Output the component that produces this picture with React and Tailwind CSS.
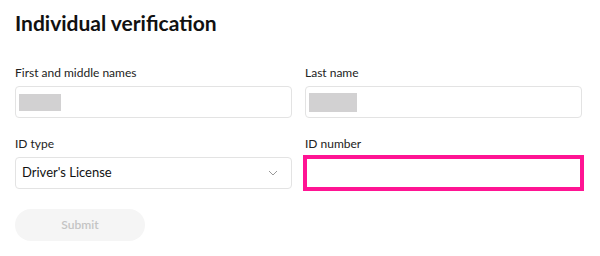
import React from "react";

function Field({ label, children }) {
  return (
    <div className="flex flex-col">
      <label className="text-[12px] leading-[16px] text-[#222] mb-[5px]">{label}</label>
      {children}
    </div>
  );
}

export default function App() {
  return (
    <div
      className="w-[600px] h-[256px] bg-white px-[15px] pt-[9px]"
      style={{ fontFamily: "Lato, 'Noto Sans', sans-serif" }}
    >
      <h1 className="text-[21px] leading-[28px] font-bold text-[#111]">Individual verification</h1>

      <div className="grid grid-cols-[277px_277px] gap-x-[13px] gap-y-[18px] mt-[28px]">
        <Field label="First and middle names">
          <div className="h-[32px] rounded-[4px] border border-[#e3e3e3] flex items-center px-[3px]">
            <div className="w-[42px] h-[17px] bg-[#d2d1d2]" />
          </div>
        </Field>
        <Field label="Last name">
          <div className="h-[32px] rounded-[4px] border border-[#e3e3e3] flex items-center px-[3px]">
            <div className="w-[48px] h-[19px] bg-[#d2d1d2] mt-[1px]" />
          </div>
        </Field>
        <Field label="ID type">
          <div className="h-[32px] rounded-[4px] border border-[#e3e3e3] flex items-center justify-between pl-[6px] pr-[13px]">
            <span className="text-[13px] text-[#111]">Driver's License</span>
            <svg width="10" height="6" viewBox="0 0 10 6" fill="none">
              <path d="M1 1l4 4 4-4" stroke="#999" strokeWidth="1" />
            </svg>
          </div>
        </Field>
        <Field label="ID number">
          <div className="relative h-[32px] rounded-[4px] border border-[#e3e3e3]">
            <div className="absolute -inset-[3px] border-[4px] border-[#ff1493]" />
          </div>
        </Field>
      </div>

      <button className="mt-[20px] w-[130px] h-[32px] rounded-full bg-[#f5f5f5] text-[12px] font-semibold text-[#c4c4c4]">
        Submit
      </button>
    </div>
  );
}
